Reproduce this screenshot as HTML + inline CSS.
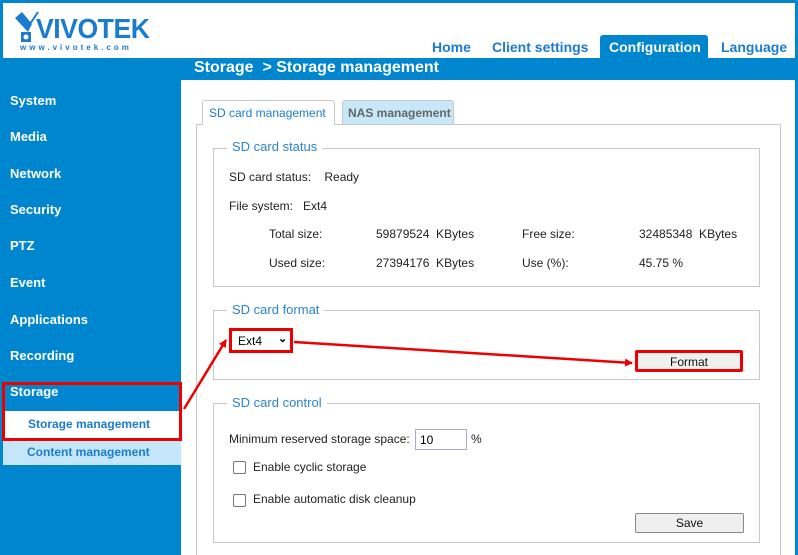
<!DOCTYPE html>
<html><head><meta charset="utf-8"><style>
*{margin:0;padding:0;box-sizing:border-box}
html{overflow:hidden;width:798px;height:555px}
body{width:798px;height:555px;overflow:hidden;background:#0085cf;font-family:"Liberation Sans",Arial,sans-serif;position:relative}
.a{position:absolute;white-space:nowrap}
.hdr{left:3px;top:3px;width:792px;height:55px;background:#fff}
.nav{top:39px;font-size:14px;font-weight:bold;color:#1a7ccf}
.side{left:10px;font-size:13px;font-weight:bold;color:#fff}
.t{font-size:12px;color:#222}
.leg{font-size:13px;color:#2a84d0;background:#fff;padding:0 5px}
.fs{border:1px solid #c8c8c8}
.btn{background:#efefef;border:1px solid #8a8a8a;border-radius:2px;font-size:12px;text-align:center;color:#111}
.cb{width:13px;height:13px;border:1px solid #777;border-radius:2px;background:#fff}
</style></head><body>
<div class="a hdr"></div>
<svg class="a" style="left:12px;top:10px" width="30" height="34" viewBox="0 0 30 34">
<path d="M3 8 L10 2 L20 14 L16 22 Z" fill="#1a7ccf"/><line x1="18" y1="14" x2="26" y2="2" stroke="#1a7ccf" stroke-width="2"/>
<rect x="9" y="22" width="10" height="10" fill="#1a7ccf"/><circle cx="14" cy="27" r="2.5" fill="#fff"/></svg>
<div class="a" style="left:36px;top:14px;font-size:28px;line-height:30px;font-weight:bold;color:#1a7ccf;letter-spacing:-0.5px;transform:scaleX(0.95);transform-origin:left">VIVOTEK</div>
<div class="a" style="left:20px;top:43px;font-size:8px;font-weight:bold;color:#1a7ccf;letter-spacing:3px">www.vivotek.com</div>
<div class="a nav" style="left:432px">Home</div>
<div class="a nav" style="left:492px">Client settings</div>
<div class="a" style="left:600px;top:35px;width:108px;height:23px;background:#0085cf;border-radius:3px 3px 0 0"></div>
<div class="a nav" style="left:609px;color:#fff">Configuration</div>
<div class="a nav" style="left:721px">Language</div>
<div class="a" style="left:194px;top:59px;font-size:16px;font-weight:bold;color:#fff">Storage &nbsp;&gt; Storage management</div>
<div class="a" style="left:181px;top:80px;width:614px;height:475px;background:#fff"></div>
<div class="a side" style="top:93px">System</div>
<div class="a side" style="top:129px">Media</div>
<div class="a side" style="top:166px">Network</div>
<div class="a side" style="top:202px">Security</div>
<div class="a side" style="top:238px">PTZ</div>
<div class="a side" style="top:275px">Event</div>
<div class="a side" style="top:312px">Applications</div>
<div class="a side" style="top:348px">Recording</div>
<div class="a side" style="top:384px">Storage</div>
<div class="a" style="left:3px;top:411px;width:178px;height:29px;background:#fff"></div>
<div class="a" style="left:3px;top:440px;width:178px;height:25px;background:#c5e6f8"></div>
<div class="a" style="left:28px;top:417px;font-size:12px;font-weight:bold;color:#1a7ccf">Storage management</div>
<div class="a" style="left:27px;top:445px;font-size:12px;font-weight:bold;color:#1a7ccf">Content management</div>
<div class="a" style="left:2px;top:382px;width:180px;height:59px;border:3px solid #e00"></div>
<div class="a" style="left:196px;top:124px;width:585px;height:440px;border:1px solid #c8c8c8;border-bottom:none"></div>
<div class="a" style="left:202px;top:100px;width:133px;height:25px;background:#fff;border:1px solid #c8c8c8;border-bottom:none;border-radius:3px 3px 0 0;font-size:12px;color:#1a7ccf;padding:5px 0 0 6px">SD card management</div>
<div class="a" style="left:342px;top:100px;width:112px;height:24px;background:#c7e8f8;border:1px solid #c8c8c8;border-bottom:none;border-radius:3px 3px 0 0;font-size:12px;font-weight:bold;color:#666;padding:5px 0 0 5px">NAS management</div>
<div class="a fs" style="left:213px;top:148px;width:547px;height:139px"></div>
<div class="a leg" style="left:227px;top:139px">SD card status</div>
<div class="a t" style="left:229px;top:170px">SD card status: &nbsp;&nbsp;&nbsp;Ready</div>
<div class="a t" style="left:229px;top:199px">File system: &nbsp;&nbsp;Ext4</div>
<div class="a t" style="left:269px;top:227px">Total size:</div>
<div class="a t" style="left:376px;top:227px">59879524 &nbsp;KBytes</div>
<div class="a t" style="left:522px;top:227px">Free size:</div>
<div class="a t" style="left:639px;top:227px">32485348 &nbsp;KBytes</div>
<div class="a t" style="left:269px;top:256px">Used size:</div>
<div class="a t" style="left:376px;top:256px">27394176 &nbsp;KBytes</div>
<div class="a t" style="left:522px;top:256px">Use (%):</div>
<div class="a t" style="left:639px;top:256px">45.75 %</div>
<div class="a fs" style="left:213px;top:310px;width:547px;height:70px"></div>
<div class="a leg" style="left:227px;top:302px">SD card format</div>
<div class="a" style="left:229px;top:328px;width:64px;height:25px;border:3px solid #e00;background:#fff;font-size:12px;padding:3px 0 0 6px">Ext4 <span style="position:absolute;left:46px;top:1px;font-size:11px;font-weight:bold">&#8964;</span></div>
<div class="a btn" style="left:635px;top:350px;width:108px;height:22px;border:3px solid #e00;padding-top:2px">Format</div>
<div class="a fs" style="left:213px;top:403px;width:547px;height:140px"></div>
<div class="a leg" style="left:227px;top:395px">SD card control</div>
<div class="a t" style="left:229px;top:432px">Minimum reserved storage space:</div>
<div class="a" style="left:415px;top:429px;width:52px;height:21px;border:1px solid #aac;font-size:12px;padding:3px 0 0 4px">10</div>
<div class="a t" style="left:471px;top:432px">%</div>
<div class="a cb" style="left:233px;top:461px"></div>
<div class="a t" style="left:253px;top:460px">Enable cyclic storage</div>
<div class="a cb" style="left:233px;top:494px"></div>
<div class="a t" style="left:253px;top:492px">Enable automatic disk cleanup</div>
<div class="a btn" style="left:635px;top:513px;width:109px;height:20px;padding-top:2px">Save</div>
<svg class="a" style="left:0;top:0" width="798" height="555">
<defs><marker id="m" markerWidth="8" markerHeight="8" refX="7" refY="4" orient="auto" markerUnits="userSpaceOnUse"><path d="M0 0 L8 4 L0 8 Z" fill="#e00"/></marker></defs>
<line x1="184" y1="409" x2="226" y2="340" stroke="#e00" stroke-width="2.5" marker-end="url(#m)"/>
<line x1="294" y1="342" x2="632" y2="363" stroke="#e00" stroke-width="2.5" marker-end="url(#m)"/>
</svg>
</body></html>
